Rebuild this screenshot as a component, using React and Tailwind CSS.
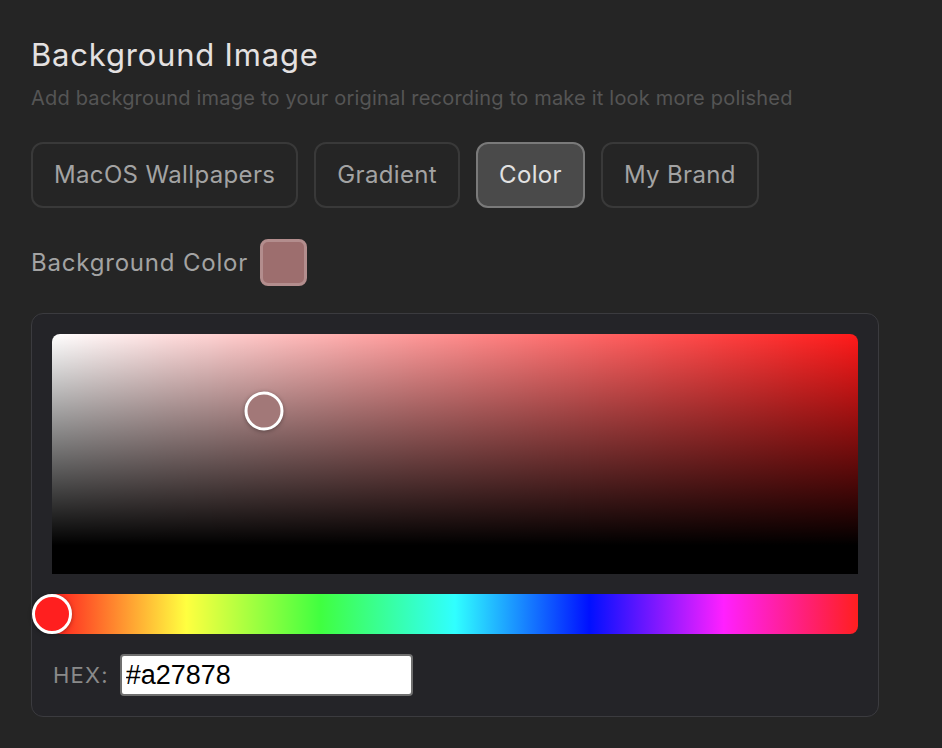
import { useState } from 'react';

const TABS = ['MacOS Wallpapers', 'Gradient', 'Color', 'My Brand'];

const HUE_GRADIENT =
  'linear-gradient(to right, #ff1f1f 0%, #ffff40 16.66%, #40ff40 33.33%, #30ffff 50%, #0010ff 66.66%, #ff20ff 83.33%, #ff1f1f 100%)';

function ColorPicker({ color, hex }) {
  return (
    <div className="flex flex-col gap-5 rounded-xl border border-[#3b3b3f] bg-[#242428] p-5 w-[848px]">
      {/* Saturation / value area */}
      <div
        className="relative h-[240px] w-full rounded-t-lg"
        style={{
          backgroundColor: '#ff1a1a',
          backgroundImage:
            'linear-gradient(to top, #000 12%, rgba(0,0,0,0) 100%), linear-gradient(to right, #fff 0%, rgba(255,255,255,0) 100%)',
        }}
      >
        <div
          className="absolute h-[39px] w-[39px] -translate-x-1/2 -translate-y-1/2 rounded-full border-[3px] border-white shadow-[0_1px_4px_rgba(0,0,0,0.35)]"
          style={{ left: 212, top: 77, backgroundColor: color }}
        />
      </div>

      {/* Hue bar */}
      <div className="relative h-10 w-full rounded-b-lg" style={{ backgroundImage: HUE_GRADIENT }}>
        <div className="absolute left-0 top-1/2 h-10 w-10 -translate-x-1/2 -translate-y-1/2 rounded-full border-[3px] border-white bg-[#ff1f1f] shadow-[0_1px_4px_rgba(0,0,0,0.35)]" />
      </div>

      <div className="flex h-[42px] items-center gap-[11px] pl-px">
        <span className="text-[22px] leading-none tracking-[1.2px] text-[#8a8a8a]">HEX:</span>
        <input
          readOnly
          value={hex}
          className="h-[42px] w-[293px] rounded border-2 border-[#6f6f6f] bg-white pl-[4px] text-[27px] text-black outline-none"
          style={{ fontFamily: '"Liberation Sans", Arial, sans-serif' }}
        />
      </div>
    </div>
  );
}

export default function App() {
  const [active, setActive] = useState('Color');
  const color = '#a27878';

  return (
    <div
      className="min-h-[748px] w-full bg-[#252525] pl-[31px] pt-[37px]"
      style={{ fontFamily: 'Inter, "Noto Sans", sans-serif' }}
    >
      <h1 className="text-[31px] leading-[36px] tracking-[0.8px] text-[#e4e1e1]">Background Image</h1>
      <p className="mt-[13px] text-[20px] leading-[24px] tracking-[0.2px] text-[#555555]">
        Add background image to your original recording to make it look more polished
      </p>

      <div className="mt-[32px] flex gap-4">
        {TABS.map((tab) => {
          const selected = tab === active;
          return (
            <button
              key={tab}
              onClick={() => setActive(tab)}
              className={
                selected
                  ? 'h-[66px] rounded-xl border-2 border-[#7a7a7a] bg-[#4a4a4a] px-[21px] text-[24px] tracking-[0.35px] text-[#e2e2e2]'
                  : 'h-[66px] rounded-xl border-2 border-[#393939] bg-transparent px-[21px] text-[24px] tracking-[0.35px] text-[#a3a3a3]'
              }
            >
              {tab}
            </button>
          );
        })}
      </div>

      <div className="mt-[31px] flex items-center gap-3">
        <span className="text-[24px] tracking-[0.8px] text-[#a3a3a3]">Background Color</span>
        <div className="h-[47px] w-[47px] rounded-lg border-[3px] border-[#b38d8d] bg-[#9d6e6e]" />
      </div>

      <div className="mt-[27px]">
        <ColorPicker color={color} hex={color} />
      </div>
    </div>
  );
}
